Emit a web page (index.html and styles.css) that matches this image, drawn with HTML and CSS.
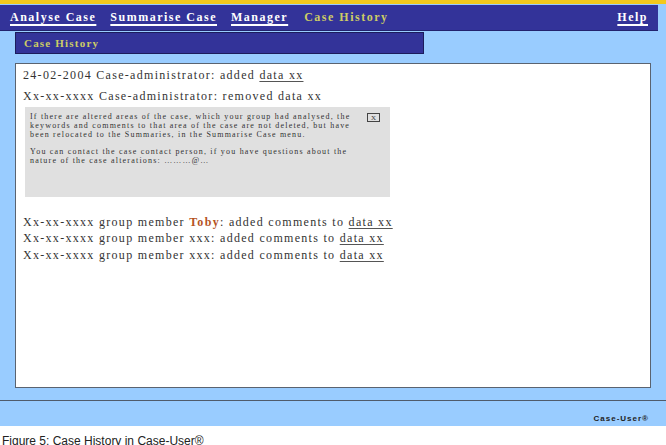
FILE: index.html
```html
<!DOCTYPE html>
<html>
<head>
<meta charset="utf-8">
<link rel="stylesheet" href="styles.css">
</head>
<body>
<div class="app">
  <div class="nav">
    <a class="nav-link" href="#">Analyse Case</a>
    <a class="nav-link" href="#">Summarise Case</a>
    <a class="nav-link" href="#">Manager</a>
    <span class="nav-current">Case History</span>
    <a class="nav-link nav-help" href="#">Help</a>
  </div>
  <div class="subbar">Case History</div>
  <div class="panel">
    <div class="entry first">24-02-2004 Case-administrator: added <u>data xx</u></div>
    <div class="entry">Xx-xx-xxxx Case-administrator: removed data xx</div>
    <div class="notice">
      <div class="notice-text">
        <p>If there are altered areas of the case, which your group had analysed, the keywords and comments to that area of the case are not deleted, but have been relocated to the Summaries, in the Summarise Case menu.</p>
        <p>You can contact the case contact person, if you have questions about the nature of the case alterations: ………@…</p>
      </div>
      <span class="close">X</span>
    </div>
    <div class="group">
      <div class="entry small">Xx-xx-xxxx group member <span class="member">Toby</span>: added comments to <u>data xx</u></div>
      <div class="entry small">Xx-xx-xxxx group member xxx: added comments to <u>data xx</u></div>
      <div class="entry small">Xx-xx-xxxx group member xxx: added comments to <u>data xx</u></div>
    </div>
  </div>
  <div class="footer"><span class="brand">Case-User®</span></div>
</div>
<div class="caption">Figure 5: Case History in Case-User®</div>
</body>
</html>
```

FILE: styles.css
```css
html, body {
  margin: 0;
  padding: 0;
  background: #ffffff;
}
body {
  width: 666px;
  height: 445px;
  overflow: hidden;
  font-family: "Liberation Serif", "Times New Roman", serif;
}
.app {
  background: #99ccff;
  border-top: 4px solid #f2c81c;
  height: 422px;
  box-sizing: content-box;
  display: flex;
  flex-direction: column;
}
.nav {
  margin-top: 1px;
  margin-right: 8px;
  height: 25px;
  background: #333399;
  box-shadow: 0 1px 0 #22226e;
  display: flex;
  align-items: center;
  padding: 0 10px;
  font-weight: bold;
  font-size: 12px;
  letter-spacing: 1.5px;
}
.nav-link {
  color: #ffffff;
  text-decoration: underline;
  text-decoration-thickness: 2px;
  text-underline-offset: 3px;
  margin-right: 14px;
}
.nav-current {
  color: #cccc66;
  margin-left: 2px;
}
.nav-help {
  margin-left: auto;
  margin-right: 0;
}
.subbar {
  margin-top: 2px;
  margin-left: 15px;
  width: 399px;
  height: 20px;
  background: #333399;
  border: 1px solid #1c1c5c;
  color: #cccc66;
  font-weight: bold;
  font-size: 11px;
  letter-spacing: 1.2px;
  line-height: 20px;
  padding-left: 8px;
  box-sizing: content-box;
}
.panel {
  margin: 9px 15px 0 15px;
  height: 323px;
  background: #ffffff;
  border: 1px solid #5a6370;
  padding: 0 8px 0 7px;
  color: #333333;
  font-size: 12px;
  letter-spacing: 1.3px;
}
.entry {
  line-height: 21px;
}
.entry.first {
  margin-top: 1px;
}
.entry u {
  text-decoration-color: #555;
  text-underline-offset: 2px;
}
.notice {
  margin-top: 0;
  margin-left: 2px;
  width: 365px;
  height: 90px;
  background: #e0e0e0;
  display: flex;
  padding: 6px 8px 0 5px;
  box-sizing: border-box;
  font-size: 8px;
  letter-spacing: 1.2px;
  line-height: 8.8px;
  color: #333333;
}
.notice-text {
  width: 334px;
  flex: none;
}
.notice-text p {
  margin: 0 0 8.8px 0;
}
.close {
  flex: none;
  width: 13px;
  height: 9px;
  border: 1px solid #444;
  box-sizing: border-box;
  font-size: 7px;
  line-height: 8px;
  text-align: center;
  letter-spacing: 0;
  margin-top: 0;
  margin-left: 3px;
}
.group {
  margin-top: 17px;
}
.entry.small {
  line-height: 16.3px;
}
.member {
  color: #b5531f;
  font-weight: bold;
}
.footer {
  margin-top: 12px;
  border-top: 1px solid #4f5b6b;
  flex: 1;
  display: flex;
  justify-content: flex-end;
  align-items: flex-end;
  padding: 0 17px 3px 0;
}
.brand {
  font-family: "Liberation Sans", Arial, sans-serif;
  font-weight: bold;
  font-size: 8px;
  letter-spacing: 1px;
  color: #222;
}
.caption {
  font-family: "Liberation Sans", Arial, sans-serif;
  font-size: 12px;
  color: #222;
  padding: 8px 0 0 2px;
}
```
